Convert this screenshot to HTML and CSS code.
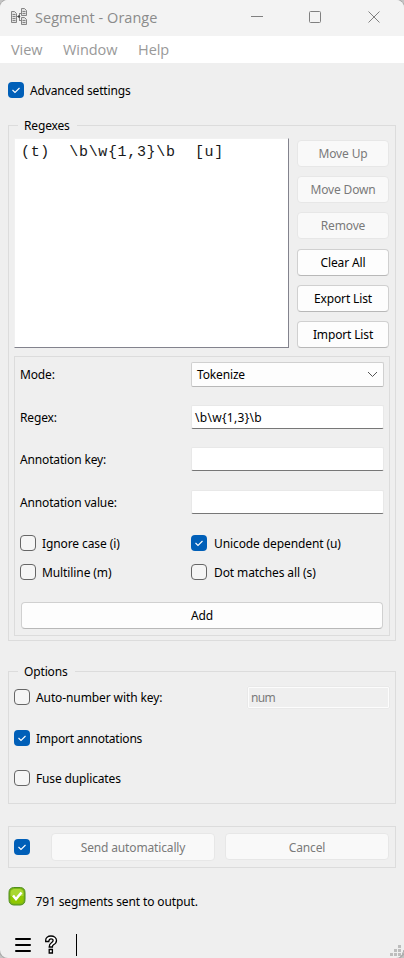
FILE: index.html
```html
<!DOCTYPE html>
<html lang="en">
<head>
<meta charset="utf-8">
<title>Segment - Orange</title>
<link rel="stylesheet" href="styles.css">
</head>
<body>
<div class="window">
  <header class="titlebar">
    <svg class="app-icon" width="17" height="19" viewBox="0 0 17 19" fill="none" stroke="#858585" stroke-width="1">
      <path fill="#e2e2e2" d="M.5 3.500h3l2 2v9h-5zM10.500.5h3l2 2v5h-5zM10.500 9.500h3l2 2v5h-5z"/>
      <path d="M1.500 6.500h3M1.500 8.500h3M1.500 10.500h3M1.500 12.500h3M11.500 3.500h3M11.500 5.500h3M11.500 12.500h3M11.500 14.500h3M8.500 5v8M8.500 5.500h2M8.500 12.500h2M6 8.500h3"/>
      <circle cx="8" cy="8.500" r="1.200" fill="#444" stroke="none"/>
    </svg>
    <h1 class="title">Segment - Orange</h1>
    <svg class="controls" width="130" height="14" viewBox="0 0 130 14" fill="none" stroke="#808080">
      <path d="M0 6.500h12"/><rect x="58.500" y="1.500" width="11" height="11" rx="1"/><path d="M117.500 1.500l11 11M128.500 1.500l-11 11"/>
    </svg>
  </header>
  <nav class="menubar"><span class="m-view">View</span><span class="m-window">Window</span><span class="m-help">Help</span></nav>

  <main class="content">
    <label class="check advanced"><i class="box on"><svg viewBox="0 0 16 16"><path d="M4.500 8l2.500 2.500 4.500-4.500"/></svg></i><span>Advanced settings</span></label>

    <fieldset class="group regexes">
      <legend>Regexes</legend>
      <div class="list-row">
        <div class="list"><pre>(t)  \b\w{1,3}\b  [u]</pre></div>
        <div class="buttons">
          <button class="btn" disabled>Move Up</button>
          <button class="btn" disabled>Move Down</button>
          <button class="btn" disabled>Remove</button>
          <button class="btn low">Clear All</button>
          <button class="btn low">Export List</button>
          <button class="btn low">Import List</button>
        </div>
      </div>
      <div class="editor">
        <div class="fields">
          <span class="name">Mode:</span>
          <div class="combo"><span>Tokenize</span><svg width="11" height="7" viewBox="0 0 11 7"><path d="M1 1l4.500 4.500L10 1" fill="none" stroke="#555"/></svg></div>
          <span class="name">Regex:</span><div class="input"><span>\b\w{1,3}\b</span></div>
          <span class="name">Annotation key:</span><div class="input"></div>
          <span class="name">Annotation value:</span><div class="input"></div>
        </div>
        <div class="flags">
          <label class="check"><i class="box"></i><span>Ignore case (i)</span></label>
          <label class="check"><i class="box on"><svg viewBox="0 0 16 16"><path d="M4.500 8l2.500 2.500 4.500-4.500"/></svg></i><span>Unicode dependent (u)</span></label>
          <label class="check"><i class="box"></i><span>Multiline (m)</span></label>
          <label class="check"><i class="box"></i><span>Dot matches all (s)</span></label>
        </div>
        <button class="btn add">Add</button>
      </div>
    </fieldset>

    <fieldset class="group options">
      <legend>Options</legend>
      <div class="auto-row">
        <label class="check"><i class="box"></i><span>Auto-number with key:</span></label>
        <div class="num">num</div>
      </div>
      <label class="check import"><i class="box on"><svg viewBox="0 0 16 16"><path d="M4.500 8l2.500 2.500 4.500-4.500"/></svg></i><span>Import annotations</span></label>
      <label class="check fuse"><i class="box"></i><span>Fuse duplicates</span></label>
    </fieldset>

    <section class="send">
      <i class="box on"><svg viewBox="0 0 16 16"><path d="M4.500 8l2.500 2.500 4.500-4.500"/></svg></i>
      <button class="btn auto" disabled>Send automatically</button>
      <button class="btn cancel" disabled>Cancel</button>
    </section>

    <div class="status">
      <svg width="18" height="19" viewBox="0 0 18 19">
        <path d="M5.500.5h7q4.500.5 4.500 5v7q0 5-4.500 5.500h-7Q1 17.500 1 12.500v-7Q1 1 5.500.5z" fill="#7cb518" stroke="#4f8f1c"/>
        <path d="M6 2h6q3.500.5 3.500 4v3h-13V6Q2.500 2.500 6 2z" fill="#a9d832"/><path d="M2.500 9h13v3q0 4-3.500 4.500H6Q2.500 16 2.500 12z" fill="#8fc800"/>
        <path d="M5 8.500l3 3.500 5.500-6.500" fill="none" stroke="#fff" stroke-width="2.600"/>
      </svg>
      <span class="message">791 segments sent to output.</span>
    </div>
  </main>

  <footer class="footer">
    <svg width="64" height="24" viewBox="0 0 64 24">
      <path d="M1 6h14M1 12h14M1 18h14" stroke="#000" stroke-width="2" stroke-linecap="round"/>
      <path d="M30.700 8.500V7.200c0-2.500 2.200-4.200 5.200-4.200s5.600 1.700 5.600 4.500c0 2.200-1.300 3.300-3 4.300-1 .6-1.100 1-1.100 2.200h-3.200c0-2.300.4-3.100 2.200-4.200 1.200-.7 1.700-1.100 1.700-2.200 0-1-.8-1.700-2.100-1.700-1.400 0-2 .7-2.200 2.600zM34.200 16.500h3.200v3.500h-3.200z" fill="#fff" stroke="#000" stroke-width="1.300"/>
      <path d="M61.500 1v22" stroke="#000"/>
    </svg>
    <svg class="grip" width="14" height="13" viewBox="0 0 14 13"><path d="M8 0h3v3H8zM4 4h3v3H4zM8 4h3v3H8zM0 8h3v3H0zM4 8h3v3H4zM8 8h3v3H8z" fill="#bdbdbd"/><path d="M14 5q-1 6-5 8" fill="none" stroke="#999"/></svg>
  </footer>
</div>
</body>
</html>
```
FILE: styles.css
```css
* { box-sizing: border-box; }
body { margin: 0; background: #c4c4c4; font: 12px/16px "Noto Sans", sans-serif; letter-spacing: -0.15px; color: #000; }
.window { width: 404px; height: 958px; display: flex; flex-direction: column; overflow: hidden; background: #efefef; border-radius: 8px; box-shadow: 0 0 0 1px #aaa; }
span, pre, .title { white-space: pre; }
svg { display: block; flex: none; }
.titlebar { height: 36px; background: #f3f3f3; display: flex; align-items: flex-start; padding: 8px 0 0 11px; }
.title { margin: 0 0 0 7px; width: 124px; font: 14.5px/20px "Open Sans", sans-serif; letter-spacing: 0.03px; color: #8b8b8b; }
.controls { margin: 2px 0 0 92px; }
.menubar { height: 27px; background: #fff; display: flex; padding: 4px 0 0 11px; font: 14.5px/19px "Open Sans", sans-serif; letter-spacing: -0.05px; color: #999; }
.m-view { width: 52px; }
.m-window { width: 75px; }
.content { padding: 19px 8px 0; display: flex; flex-direction: column; }
.check { display: flex; align-items: center; gap: 6px; height: 16px; }
.check span, .name { padding-top: 2px; }
.box { width: 16px; height: 16px; flex: none; border: 1px solid #666; border-radius: 4px; background: #f5f5f5; }
.box.on { border: 0; background: #005fb8; }
.box path { fill: none; stroke: #fff; stroke-width: 1.1; }
.group { position: relative; min-width: 0; margin: 0; border: 1px solid #dcdcdc; padding: 0 5px; }
.group legend { position: absolute; top: -8px; left: 9px; padding: 0 7px 0 6px; background: #efefef; }
.regexes { height: 516px; margin-top: 27px; padding-top: 12px; }
.list-row { display: flex; gap: 8px; height: 210px; }
.list { width: 275px; background: #fff; border: 1px solid #f1f1f1; border-right-color: #83838d; border-bottom-color: #83838d; }
.list pre { margin: 5px 0 0 6px; font: 15px/17px "Liberation Mono", monospace; letter-spacing: 0.66px; color: #181818; }
.buttons { width: 92px; padding-top: 2px; display: flex; flex-direction: column; justify-content: space-between; }
.btn { height: 27px; padding: 0; border: 1px solid #d0d0d0; border-bottom-color: #b8b8b8; border-radius: 4px; background: #fdfdfd; font: inherit; letter-spacing: inherit; color: #000; text-align: center; white-space: nowrap; }
.btn.low { padding-top: 2px; }
.btn:disabled { border-color: #e7e7e7; background: #f9f9f9; color: #7a7a7a; }
.editor { width: 376px; height: 280px; margin-top: 8px; padding: 5px; border: 1px solid #dcdcdc; }
.fields { display: grid; grid-template-columns: 171px 193px; grid-template-rows: 24px 24px 24px 24px; row-gap: 18.7px; align-items: center; }
.combo { height: 25px; display: flex; align-items: center; justify-content: space-between; padding: 1px 5px 0; background: #fdfdfd; border: 1px solid #d0d0d0; border-bottom-color: #b8b8b8; border-radius: 2px; }
.input { height: 24px; padding: 4px 3px 2px; background: #fff; border: 1px solid #e8e8e8; border-bottom-color: #777; border-radius: 2px; letter-spacing: 0.3px; }
.flags { display: grid; grid-template-columns: 171px 193px; row-gap: 13px; margin-top: 21px; }
.flags .check:nth-child(even) { gap: 7px; }
.flags .check { letter-spacing: -0.1px; }
.add { display: block; width: 362px; margin: 22px 0 0 1px; }
.options { height: 133px; margin-top: 30px; padding-top: 14px; }
.auto-row { display: flex; justify-content: space-between; height: 23px; }
.auto-row .check { margin-top: 3px; letter-spacing: -0.1px; }
.num { width: 143px; height: 23px; padding: 2px 2px 0; border: 2px solid #fcfcfc; outline: 1px solid #e9e9e9; outline-offset: -1px; border-radius: 2px; color: #7a7a7a; letter-spacing: -0.7px; }
.import { margin-top: 21px; letter-spacing: -0.22px; }
.fuse { margin-top: 24px; }
.send { height: 42px; margin-top: 22px; padding: 6px 0 0 5px; display: flex; border: 1px solid #dcdcdc; }
.send .box { margin-top: 6px; }
.send .btn { padding-top: 1px; }
.auto { width: 164px; height: 28px; margin-left: 21px; }
.send .cancel { width: 164px; margin-left: 10px; padding-top: 2px; }
.status { display: flex; gap: 9px; margin-top: 19px; }
.message { margin: 7px 0 0 0.5px; letter-spacing: -0.12px; }
.footer { margin-top: auto; height: 25px; padding-left: 15px; display: flex; justify-content: space-between; }
.grip { align-self: flex-end; }
```
